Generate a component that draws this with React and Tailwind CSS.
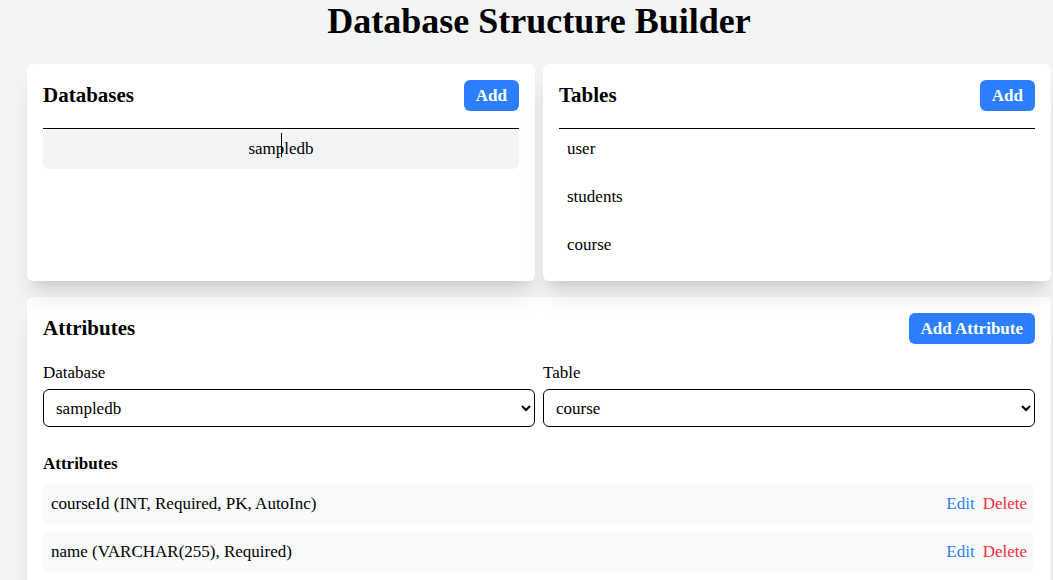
import { useState } from "react";

const tables = ["user", "students", "course"];

const attributes = [
  "courseId (INT, Required, PK, AutoInc)",
  "name (VARCHAR(255), Required)",
];

function Card({ children, className = "" }) {
  return (
    <div className={`bg-white rounded-md shadow-xl p-4 ${className}`}>
      {children}
    </div>
  );
}

function App() {
  const [db, setDb] = useState("sampledb");
  const [table, setTable] = useState("course");

  return (
    <div
      className="min-h-screen bg-gray-100 text-black text-[17px] leading-6"
      style={{ fontFamily: 'Georgia, "Liberation Serif", serif' }}
    >
      <div className="w-[1024px] ml-[27px] pt-[3px]">
        <h1 className="text-[36px] leading-9 font-bold text-center mb-[25px]">
          Database Structure Builder
        </h1>

        <div className="grid grid-cols-2 gap-2">
          <Card>
            <div className="flex items-center justify-between pb-[17px] border-b border-black">
              <h2 className="text-[21px] leading-[31px] font-bold">Databases</h2>
              <button className="bg-blue-500 text-white font-semibold rounded-md px-3 h-[31px]">
                Add
              </button>
            </div>
            <ul className="flex flex-col gap-2">
              <li className="relative bg-gray-100 rounded-md h-10 flex items-center justify-center">
                sampledb
                <span className="absolute left-[238px] top-1 h-6 w-px bg-black" />
              </li>
            </ul>
          </Card>

          <Card>
            <div className="flex items-center justify-between pb-[17px] border-b border-black">
              <h2 className="text-[21px] leading-[31px] font-bold">Tables</h2>
              <button className="bg-blue-500 text-white font-semibold rounded-md px-3 h-[31px]">
                Add
              </button>
            </div>
            <ul className="flex flex-col gap-2">
              {tables.map((t) => (
                <li key={t} className="h-10 px-2 flex items-center">
                  {t}
                </li>
              ))}
            </ul>
          </Card>
        </div>

        <Card className="mt-4">
          <div className="flex items-center justify-between mb-[17px]">
            <h2 className="text-[21px] leading-[31px] font-bold">Attributes</h2>
            <button className="bg-blue-500 text-white font-semibold rounded-md px-3 h-[31px]">
              Add Attribute
            </button>
          </div>

          <div className="grid grid-cols-2 gap-2 mb-[25px]">
            <div>
              <label className="block mb-1">Database</label>
              <select
                value={db}
                onChange={(e) => setDb(e.target.value)}
                className="w-full h-[38px] border border-black rounded-md px-2 bg-white"
              >
                <option>sampledb</option>
              </select>
            </div>
            <div>
              <label className="block mb-1">Table</label>
              <select
                value={table}
                onChange={(e) => setTable(e.target.value)}
                className="w-full h-[38px] border border-black rounded-md px-2 bg-white"
              >
                {tables.map((t) => (
                  <option key={t}>{t}</option>
                ))}
              </select>
            </div>
          </div>

          <h3 className="font-bold mb-2">Attributes</h3>
          <ul className="flex flex-col gap-2">
            {attributes.map((a) => (
              <li
                key={a}
                className="bg-gray-50 rounded-md h-10 px-2 flex items-center justify-between"
              >
                <span>{a}</span>
                <span className="flex gap-2">
                  <button className="text-blue-500">Edit</button>
                  <button className="text-red-500">Delete</button>
                </span>
              </li>
            ))}
          </ul>
        </Card>
      </div>
    </div>
  );
}

export default App;
